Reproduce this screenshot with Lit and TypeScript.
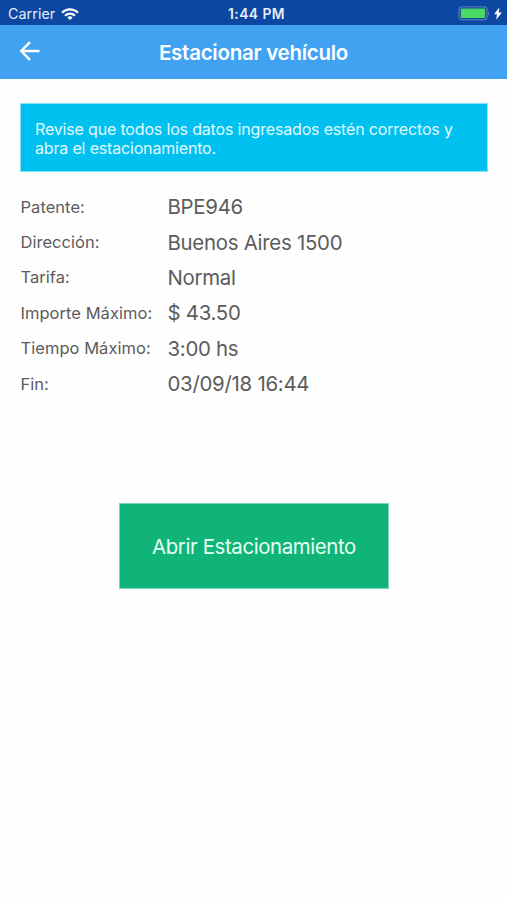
import { LitElement, html, css } from "lit";
import { customElement, property } from "lit/decorators.js";

@customElement("status-bar")
class StatusBar extends LitElement {
  static styles = css`
    :host {
      display: grid;
      grid-template-columns: 1fr auto 1fr;
      align-items: center;
      height: 25px;
      padding: 2px 5px 0 8px;
      box-sizing: border-box;
      background: #0c47a1;
      color: #e6eefa;
      font-size: 14.3px;
    }
    .left, .right { display: flex; align-items: center; }
    .left { gap: 6px; }
    .right { justify-content: flex-end; gap: 4px; }
    .carrier { letter-spacing: 0.05px; }
    .time { font-size: 13.8px; font-weight: 600; letter-spacing: 0.45px; margin-left: 3px; }
    svg { display: block; }
  `;
  render() {
    return html`
      <div class="left">
        <span class="carrier">Carrier</span>
        <svg width="18" height="12" viewBox="0 0 18 12" fill="none" stroke="#fff" stroke-width="2.2">
          <path d="M1 4.7C5.5 .2 12.5 .2 17 4.7" />
          <path d="M4 7.7C6.8 4.9 11.2 4.9 14 7.7" />
          <path d="M9 12L6.4 9.4C7.9 8 10.1 8 11.6 9.4Z" fill="#fff" stroke="none" />
        </svg>
      </div>
      <span class="time">1:44 PM</span>
      <div class="right">
        <svg width="32" height="15" viewBox="0 0 32 15">
          <rect x="1" y=".8" width="28" height="13" rx="3" fill="none" stroke="#5379b5" stroke-width="1.3" />
          <rect x="2.8" y="2.6" width="24.4" height="9.4" rx="1" fill="#4bd964" />
          <path d="M30.2 5v4.6c1.6-.7 1.6-3.9 0-4.6z" fill="#5379b5" />
        </svg>
        <svg width="8" height="13" viewBox="0 0 8 13">
          <path d="M5.4 .2L.1 7.300H3L2.200 12.800L7.900 5.400H4.700Z" fill="#fff" />
        </svg>
      </div>
    `;
  }
}

@customElement("nav-header")
class NavHeader extends LitElement {
  static styles = css`
    :host {
      display: grid;
      grid-template-columns: 40px 1fr 40px;
      align-items: center;
      height: 54px;
      padding: 0 19px;
      box-sizing: border-box;
      background: #42a2f2;
      color: #fff;
    }
    .title {
      margin: 2px 0 0;
      text-align: center;
      font-size: 20.5px;
      line-height: 26px;
      font-weight: 600;
      letter-spacing: -0.27px;
    }
    .back { display: block; margin-top: -3px; }
  `;
  @property() heading = "";
  render() {
    return html`
      <svg class="back" width="21" height="20" viewBox="0 0 21 20" fill="none" stroke="#fff" stroke-width="2.4">
        <path d="M20.5 10H2.2M11 1.2L2.2 10L11 18.8" />
      </svg>
      <h1 class="title">${this.heading}</h1>
    `;
  }
}

@customElement("detail-row")
class DetailRow extends LitElement {
  static styles = css`
    :host {
      display: grid;
      grid-template-columns: 147px 1fr;
      align-items: center;
      height: 35.4px;
      color: #5c5c5c;
    }
    .label { font-size: 16.5px; letter-spacing: 0.04px; white-space: nowrap; }
    .value { font-size: 20.4px; letter-spacing: -0.27px; white-space: nowrap; }
  `;
  @property() label = "";
  @property() value = "";
  render() {
    return html`<span class="label">${this.label}</span><span class="value">${this.value}</span>`;
  }
}

const details = [
  { label: "Patente:", value: "BPE946" },
  { label: "Dirección:", value: "Buenos Aires 1500" },
  { label: "Tarifa:", value: "Normal" },
  { label: "Importe Máximo:", value: "$ 43.50" },
  { label: "Tiempo Máximo:", value: "3:00 hs" },
  { label: "Fin:", value: "03/09/18 16:44" },
];

@customElement("app-root")
class AppRoot extends LitElement {
  static styles = css`
    :host {
      display: flex;
      flex-direction: column;
      height: 900px;
      background: #fefefe;
      font-family: Inter, "Liberation Sans", sans-serif;
    }
    .content {
      display: flex;
      flex-direction: column;
      padding: 24px 19px 0 20px;
    }
    .notice {
      margin: 0;
      box-sizing: border-box;
      height: 69px;
      padding: 16px 14px;
      border: 1px solid #86e2f8;
      background: #00c0f0;
      color: #e0faff;
      font-size: 16px;
      letter-spacing: -0.17px;
      line-height: 19px;
      white-space: nowrap;
    }
    .details { margin-top: 17px; padding-left: 0.5px; }
    .open {
      align-self: center;
      box-sizing: border-box;
      width: 270px;
      height: 86px;
      margin-top: 101.6px;
      padding: 1px 0 0;
      border: 1px solid #7ed4b4;
      background: #10b479;
      color: #e6fff4;
      font-family: inherit;
      font-size: 20.4px;
      letter-spacing: -0.38px;
    }
  `;
  render() {
    return html`
      <status-bar></status-bar>
      <nav-header heading="Estacionar vehículo"></nav-header>
      <main class="content">
        <p class="notice">Revise que todos los datos ingresados estén correctos y<br />abra el estacionamiento.</p>
        <div class="details">
          ${details.map((d) => html`<detail-row .label=${d.label} .value=${d.value}></detail-row>`)}
        </div>
        <button class="open">Abrir Estacionamiento</button>
      </main>
    `;
  }
}
